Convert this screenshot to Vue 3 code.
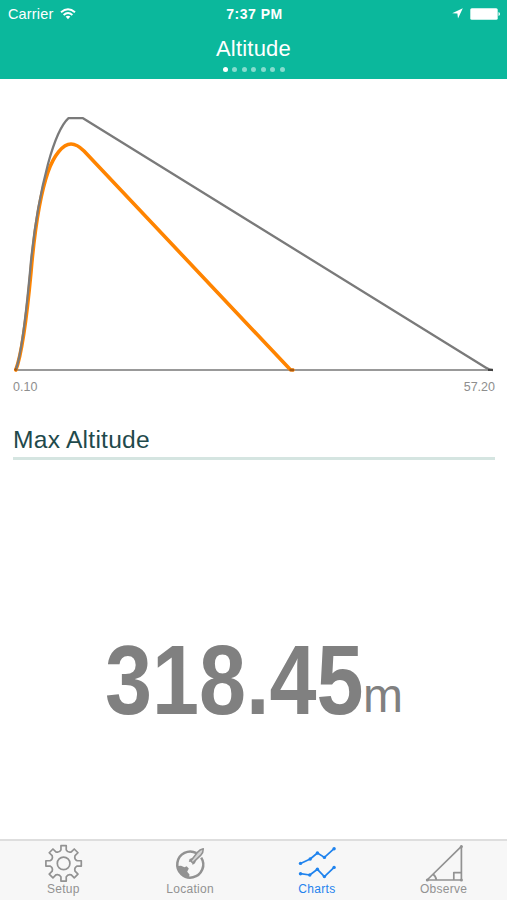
<template>
  <div class="screen">
    <header class="header">
      <div class="status">
        <div class="status-left">
          <span class="carrier">Carrier</span>
          <svg class="wifi" width="16" height="12" viewBox="0 0 16 12">
            <path d="M1 4.2 Q8 -1.8 15 4.2" />
            <path d="M3.6 7 Q8 3.2 12.4 7" />
            <path class="wifi-dot" d="M5.6 8.6 Q8 6.8 10.4 8.6 L8 11.2 Z" />
          </svg>
        </div>
        <span class="time">7:37 PM</span>
        <div class="status-right">
          <svg width="11" height="11" viewBox="0 0 11 11">
            <path d="M10.8 0.2 L6 10.5 L5.4 5.6 L0.2 5.2 Z" fill="#fff" />
          </svg>
          <svg width="31" height="12" viewBox="0 0 31 12">
            <rect x="0.3" y="0.3" width="27.4" height="11.4" rx="1.5" fill="#fff" />
            <path d="M28.5 4 Q30 4.3 30 6 Q30 7.7 28.5 8 Z" fill="#fff" />
          </svg>
        </div>
      </div>
      <h1 class="title">Altitude</h1>
      <div class="dots">
        <span
          v-for="n in pageCount"
          :key="n"
          class="dot"
          :class="{ active: n === currentPage }"
        ></span>
      </div>
    </header>

    <section class="chart">
      <svg class="plot" width="507" height="299" viewBox="0 79 507 299">
        <path class="axis" d="M15 370 H493" />
        <path class="line-actual" :d="actualPath" />
        <path class="line-ideal" :d="idealPath" />
        <path class="mark" d="M14.8 370.3 L16.5 368.8 M289.5 370 H294" />
        <path class="mark-end" d="M488 370 H493" />
      </svg>
      <div class="range">
        <span>0.10</span>
        <span>57.20</span>
      </div>
    </section>

    <h2 class="section-title">Max Altitude</h2>

    <main class="reading">
      <span class="value">318.45</span>
      <span class="unit">m</span>
    </main>

    <nav class="tabs">
      <a
        v-for="tab in tabs"
        :key="tab.id"
        class="tab"
        :class="{ active: tab.id === activeTab }"
        @click="activeTab = tab.id"
      >
        <svg class="icon" width="40" height="38" viewBox="0 0 40 38">
          <template v-if="tab.id === 'setup'">
            <path :d="gearPath" />
            <circle cx="20.6" cy="19.4" r="6.3" />
          </template>
          <template v-else-if="tab.id === 'location'">
            <path class="ring" d="M26.5 9.2 A13 13 0 1 0 31.2 13.6" />
            <path class="solid" d="M7 22 L11 21.8 L14.5 23.2 L16.6 22.2 L18.8 24.5 L17.2 27.8 L19.5 30.5 L19 33.6 Q9 32.5 7 22 Z" />
            <path class="solid" d="M22.8 13.8 L19.6 15 L18.8 18 L20.8 17.4 L22.6 19 L22.4 21 L25 19.2 L26 16.6 Z" />
            <path class="rocket" d="M33.3 4.7 Q29.8 5.3 27.3 8.5 L20.8 17 L22.8 18.9 L30.6 11.4 Q33.5 8.3 33.3 4.7 Z" />
          </template>
          <template v-else-if="tab.id === 'charts'">
            <g v-for="(series, i) in sparkSeries" :key="i">
              <polyline :points="toPoints(series)" />
              <circle
                v-for="(p, j) in series"
                :key="j"
                class="solid"
                :cx="p[0]"
                :cy="p[1]"
                r="1.7"
              />
            </g>
          </template>
          <template v-else>
            <path d="M3.1 36 L37.4 2.3 V36 Z" />
            <path d="M29.8 36 V28.6 H37.4 M9 30.2 Q12.2 32.5 12.3 36" />
            <circle class="solid" cx="37.4" cy="2.5" r="1.5" />
            <circle class="solid" cx="3.3" cy="36" r="1.5" />
            <circle class="solid" cx="37.4" cy="36" r="1.5" />
          </template>
        </svg>
        <span class="label">{{ tab.label }}</span>
      </a>
    </nav>
  </div>
</template>

<script setup>
import { ref } from 'vue'

const pageCount = 7
const currentPage = ref(1)
const activeTab = ref('charts')

const tabs = [
  { id: 'setup', label: 'Setup' },
  { id: 'location', label: 'Location' },
  { id: 'charts', label: 'Charts' },
  { id: 'observe', label: 'Observe' }
]

const actualPath =
  'M15.8 370 C23 351 28 304 31 272 C35 225 40 195 48 172 C54 155 63 144 71 144 C76 144 80 147 84 151 L289.5 368.8 Q290.5 370 293 370'
const idealPath =
  'M15.8 370 C23 350 27 303 30 272 C34 225 40 194 48 164 C54 142 60 126 68.5 118.2 H83 L486 367.8 Q489 370 493 370'

const sparkSeries = [
  [[3.5, 19.4], [13.2, 15], [20.4, 9], [27.4, 13.4], [37.1, 4.7]],
  [[3.5, 29.7], [12.8, 31], [20.4, 25.3], [27.4, 32.6], [37.1, 23.4]]
]

function toPoints(series) {
  return series.map(p => p.join(',')).join(' ')
}

function polar(deg, r) {
  const a = (deg * Math.PI) / 180
  return `${(20.6 + r * Math.sin(a)).toFixed(2)} ${(19.4 - r * Math.cos(a)).toFixed(2)}`
}

// eight teeth, with a rounded valley between each pair
const gearPath = Array.from({ length: 8 }, (_, i) => {
  const a = i * 45
  const start = i === 0 ? `M${polar(a - 11, 13.8)}` : ''
  return `${start} L${polar(a - 8.5, 17.9)} L${polar(a + 8.5, 17.9)} L${polar(a + 11, 13.8)} Q${polar(a + 22.5, 11.2)} ${polar(a + 34, 13.8)}`
}).join(' ') + ' Z'
</script>

<style>
body {
  margin: 0;
}
</style>

<style scoped>
.screen {
  width: 507px;
  height: 900px;
  display: flex;
  flex-direction: column;
  overflow: hidden;
  background: #fff;
  font-family: "Liberation Sans", Arial, sans-serif;
}

.header {
  height: 79px;
  flex: none;
  background: #0bb89c;
  color: #fff;
}

.status {
  display: grid;
  grid-template-columns: 1fr auto 1fr;
  align-items: center;
  height: 27px;
  padding: 0 6px 0 8px;
}

.status-left,
.status-right {
  display: flex;
  align-items: center;
}

.status-left { gap: 7px; }
.status-right { justify-content: flex-end; gap: 7px; }
.carrier { font-size: 14.5px; letter-spacing: 0.15px; }

.time {
  font-weight: bold;
  font-size: 14px;
  letter-spacing: 0.5px;
}

.wifi path {
  fill: none;
  stroke: #fff;
  stroke-width: 1.9;
}

.wifi .wifi-dot {
  fill: #fff;
  stroke: none;
}

.title {
  margin: 9px 0 0;
  font-size: 22px;
  line-height: 26px;
  font-weight: normal;
  letter-spacing: 0.2px;
  text-align: center;
}

.dots {
  display: flex;
  justify-content: center;
  gap: 4.5px;
  margin-top: 4.5px;
}

.dot {
  width: 5px;
  height: 5px;
  border-radius: 50%;
  background: rgba(255, 255, 255, 0.5);
}

.dot.active { background: #fff; }

.chart {
  height: 345px;
  flex: none;
}

.plot { display: block; }

.plot path {
  fill: none;
  stroke-linejoin: round;
}

.plot .axis { stroke: #777; stroke-width: 1.4; }
.plot .line-actual { stroke: #ff8400; stroke-width: 3.6; stroke-linecap: round; }
.plot .line-ideal { stroke: #7a7a7a; stroke-width: 2.3; }
.plot .mark { stroke: #a85a10; stroke-width: 2.5; }
.plot .mark-end { stroke: #444; stroke-width: 2; }

.range {
  display: flex;
  justify-content: space-between;
  padding: 1px 12px 0 13px;
  font-size: 12.5px;
  line-height: 16px;
  color: #8e8e8e;
}

.section-title {
  height: 33px;
  flex: none;
  margin: 0 12px 0 13px;
  border-bottom: 3px solid #d5e5e1;
  color: #1f4a4c;
  font-size: 24.6px;
  line-height: 32px;
  font-weight: normal;
  letter-spacing: 0.25px;
}

.reading {
  flex: 1;
  display: flex;
  justify-content: center;
  align-items: flex-start;
  padding: 164px 0 0 1px;
  color: #808080;
}

.value {
  width: 258px;
  font-size: 98px;
  font-weight: bold;
  line-height: 112px;
  transform: scaleX(0.862);
  transform-origin: left;
}

.unit {
  margin-top: 48px;
  font-size: 48px;
  line-height: 48px;
}

.tabs {
  display: flex;
  height: 59px;
  flex: none;
  border-top: 2px solid #dedede;
  background: #f7f7f7;
}

.tab {
  flex: 1;
  display: flex;
  flex-direction: column;
  align-items: center;
  padding-top: 3px;
  color: #929292;
  cursor: pointer;
}

.tab.active { color: #1f83ee; }

.icon {
  display: block;
  fill: none;
  stroke: currentColor;
  stroke-width: 1.7;
  stroke-linejoin: round;
}

.icon .solid { fill: currentColor; stroke: none; }
.icon .ring { stroke-width: 2.5; }
.icon .rocket { fill: #d2d2d2; stroke-width: 1.5; }

.label {
  font-size: 12px;
  line-height: 15px;
  letter-spacing: 0.3px;
}
</style>
